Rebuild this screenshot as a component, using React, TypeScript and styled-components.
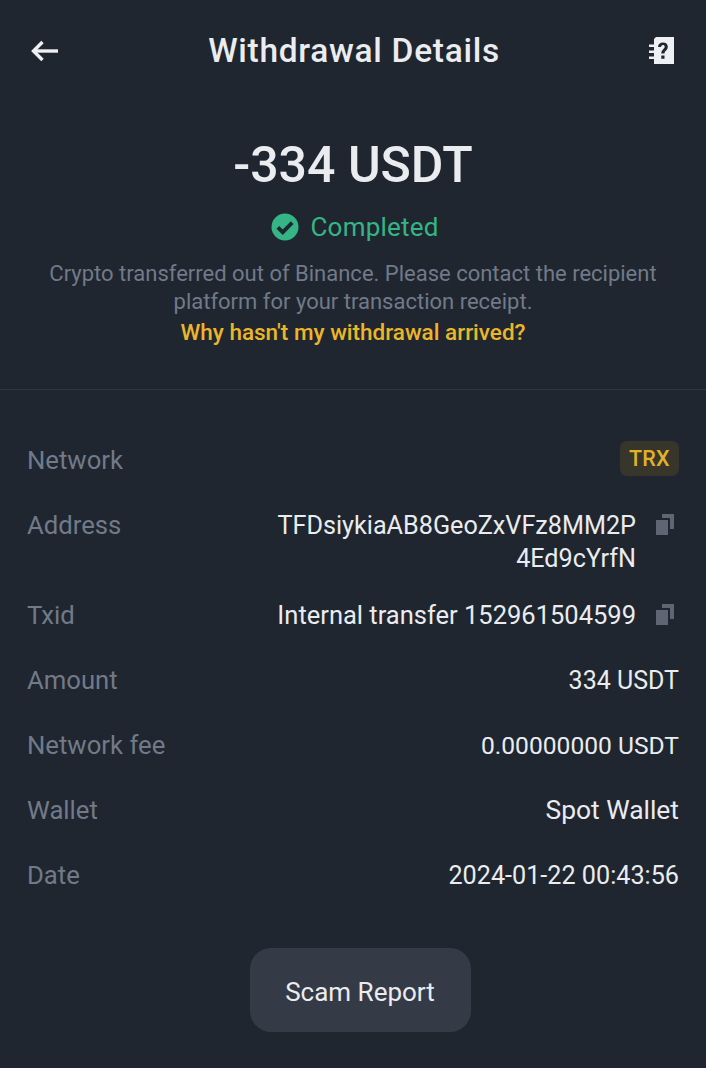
import styled, { createGlobalStyle } from 'styled-components';

const GlobalStyle = createGlobalStyle`
    html, body {
        margin: 0;
        padding: 0;
        background: #1f2630;
    }
`;

const Page = styled.div`
    width: 706px;
    height: 1068px;
    overflow: hidden;
    background: #1f2630;
    color: #eaecef;
    font-family: 'Roboto', 'Liberation Sans', sans-serif;
`;

const Header = styled.header`
    display: flex;
    align-items: center;
    justify-content: space-between;
    height: 42px;
    padding: 30px 30px 0 30px;
`;

const IconButton = styled.div`
    width: 30px;
    height: 30px;
    display: flex;
    align-items: center;
    justify-content: center;
`;

const Title = styled.h1`
    margin: 0;
    padding-left: 2px;
    font-size: 33.5px;
    line-height: 42px;
    font-weight: 500;
    letter-spacing: 0.7px;
    color: #eaecef;
`;

const Summary = styled.section`
    display: flex;
    flex-direction: column;
    align-items: center;
    padding-top: 64px;
    height: 253px;
    border-bottom: 1px solid #2f3640;
`;

const Amount = styled.div`
    font-size: 50px;
    line-height: 58px;
    font-weight: 500;
    color: #eaecef;
`;

const Status = styled.div`
    display: flex;
    align-items: center;
    gap: 11px;
    margin-top: 16px;
    padding-left: 4px;
    height: 34px;
    font-size: 26px;
    letter-spacing: 0.2px;
    color: #35b585;
`;

const Note = styled.p`
    margin: 16px 0 0;
    width: 640px;
    font-size: 22px;
    line-height: 28px;
    text-align: center;
    color: #717a88;
`;

const HelpLink = styled.div`
    margin-top: 1px;
    font-size: 22.5px;
    line-height: 30px;
    font-weight: 500;
    color: #ecb62a;
`;

const Details = styled.section`
    display: flex;
    flex-direction: column;
    padding: 54px 27px 0;
`;

const Row = styled.div<{ $height?: number }>`
    display: flex;
    justify-content: space-between;
    align-items: flex-start;
    height: ${(props) => props.$height ?? 65}px;
`;

const Label = styled.div`
    font-size: 25.7px;
    line-height: 33px;
    color: #717a88;
`;

const Value = styled.div<{ $size?: number }>`
    display: flex;
    align-items: flex-start;
    gap: 19px;
    font-size: ${(props) => props.$size ?? 25}px;
    line-height: 33px;
    color: #eaecef;
`;

const ValueText = styled.div<{ $width?: number }>`
    text-align: right;
    width: ${(props) => (props.$width ? `${props.$width}px` : 'auto')};
    word-break: break-all;
`;

const Badge = styled.div`
    margin-top: -3px;
    padding: 0 9px;
    height: 35px;
    line-height: 36px;
    font-size: 21.5px;
    font-weight: 500;
    letter-spacing: 0.3px;
    color: #e0b12a;
    background: #38352a;
    border-radius: 7px;
`;

const Footer = styled.div`
    display: flex;
    justify-content: center;
    margin-top: 24px;
    padding-left: 14px;
`;

const ReportButton = styled.button`
    width: 221px;
    height: 84px;
    padding-top: 4px;
    border: none;
    border-radius: 21px;
    background: #343b46;
    color: #eaecef;
    font-family: inherit;
    font-size: 26px;
`;

const CopyGlyph = styled.svg`
    flex: none;
    margin-top: 5px;
`;

const BackIcon = () => (
    <svg width="30" height="22" viewBox="0 0 30 22" fill="none" stroke="#eef0f4" strokeWidth="3.4">
        <path d="M28 11H4" />
        <path d="M12.500 2L3.500 11l9 9" />
    </svg>
);

const HelpIcon = () => (
    <svg width="30" height="30" viewBox="0 0 30 30">
        <path
            fill="#eef0f4"
            fillRule="evenodd"
            d="M10 1h18v27H8V23H3v-2.500h5V17H3v-2.500h5V11H3V8.500h5V3zm5.300 16.600h3.200c0-2.800 3.300-3.200 3.300-6.800 0-2.800-2-4.300-4.800-4.300-2.900 0-4.900 1.700-5 4.500h3.100c.1-1.200.8-1.900 1.900-1.900 1 0 1.700.6 1.700 1.600 0 2-3.400 2.800-3.400 6.900zM15.300 19.500v3.300h3.200v-3.300h-3.200z"
        />
    </svg>
);

const CheckIcon = () => (
    <svg width="28" height="28" viewBox="0 0 28 28">
        <circle cx="14" cy="14" r="13.500" fill="#35b585" />
        <path d="M6.800 14.300l5 4.900 9.400-9.500" fill="none" stroke="#1f2630" strokeWidth="3.800" />
    </svg>
);

const CopyIcon = () => (
    <CopyGlyph width="24" height="24" viewBox="0 0 24 24" fill="#5e6673">
        <rect x="1" y="6" width="12" height="15" />
        <path d="M7 0h12v15h-4V4H7z" />
    </CopyGlyph>
);

const App = () => (
    <Page>
        <GlobalStyle />
        <Header>
            <IconButton>
                <BackIcon />
            </IconButton>
            <Title>Withdrawal Details</Title>
            <IconButton>
                <HelpIcon />
            </IconButton>
        </Header>
        <Summary>
            <Amount>-334 USDT</Amount>
            <Status>
                <CheckIcon />
                Completed
            </Status>
            <Note>
                Crypto transferred out of Binance. Please contact the recipient platform for your
                transaction receipt.
            </Note>
            <HelpLink>Why hasn't my withdrawal arrived?</HelpLink>
        </Summary>
        <Details>
            <Row>
                <Label>Network</Label>
                <Badge>TRX</Badge>
            </Row>
            <Row $height={90}>
                <Label>Address</Label>
                <Value $size={25.2}>
                    <ValueText $width={370}>TFDsiykiaAB8GeoZxVFz8MM2P 4Ed9cYrfN</ValueText>
                    <CopyIcon />
                </Value>
            </Row>
            <Row>
                <Label>Txid</Label>
                <Value $size={25.5}>
                    <ValueText>Internal transfer 152961504599</ValueText>
                    <CopyIcon />
                </Value>
            </Row>
            <Row>
                <Label>Amount</Label>
                <Value>334 USDT</Value>
            </Row>
            <Row>
                <Label>Network fee</Label>
                <Value $size={24.6}>0.00000000 USDT</Value>
            </Row>
            <Row>
                <Label>Wallet</Label>
                <Value $size={26.4}>Spot Wallet</Value>
            </Row>
            <Row>
                <Label>Date</Label>
                <Value $size={25.2}>2024-01-22 00:43:56</Value>
            </Row>
        </Details>
        <Footer>
            <ReportButton>Scam Report</ReportButton>
        </Footer>
    </Page>
);

export default App;
